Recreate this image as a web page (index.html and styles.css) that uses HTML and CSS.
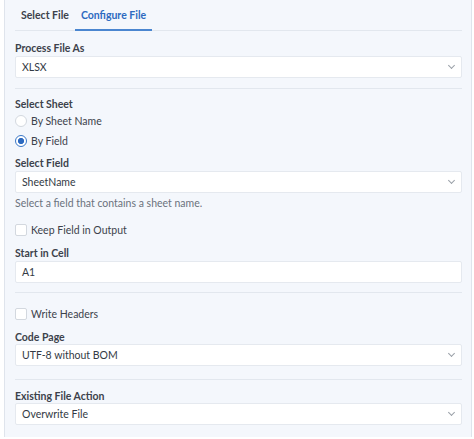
FILE: index.html
```html
<!DOCTYPE html>
<html>
<head>
  <meta charset="utf-8">
  <meta name="viewport" content="width=device-width">
  <title>Configure File</title>
  <link rel="stylesheet" href="styles.css">
</head>
<body>
  <section class="panel">
    <div class="tabs">
      <div class="tab">Select File</div>
      <div class="tab tab_active">Configure File</div>
    </div>

    <div class="label label_first">Process File As</div>
    <div class="select">XLSX<span class="chevron"></span></div>
    <div class="divider"></div>

    <div class="label label_group">Select Sheet</div>
    <div class="option"><span class="radio"></span>By Sheet Name</div>
    <div class="option"><span class="radio radio_on"></span>By Field</div>
    <div class="label label_field">Select Field</div>
    <div class="select">SheetName<span class="chevron"></span></div>
    <div class="help">Select a field that contains a sheet name.</div>
    <div class="option option_check"><span class="check"></span>Keep Field in Output</div>
    <div class="label label_cell">Start in Cell</div>
    <div class="select">A1</div>
    <div class="divider divider_cell"></div>

    <div class="option option_block"><span class="check"></span>Write Headers</div>
    <div class="label label_code">Code Page</div>
    <div class="select">UTF-8 without BOM<span class="chevron"></span></div>
    <div class="divider divider_code"></div>

    <div class="label label_action">Existing File Action</div>
    <div class="select">Overwrite File<span class="chevron"></span></div>
  </section>
</body>
</html>
```

FILE: styles.css
```css
body {
  margin: 0;
  background-color: #ffffff;
  font-family: Lato, "Noto Sans", sans-serif;
  font-size: 10.5px;
  color: #333a44;
}

.panel {
  box-sizing: border-box;
  margin-left: 4px;
  width: 468px;
  height: 437px;
  padding: 0 9px 0 10px;
  background-color: #f4f7fc;
  border-left: 1px solid #dfe4ec;
  border-right: 1px solid #dfe4ec;
}

.tabs {
  display: flex;
  height: 31px;
  border-bottom: 1px solid #e2e7ee;
  box-sizing: border-box;
}
.tab {
  display: flex;
  align-items: center;
  padding: 0 6px;
  font-weight: 700;
  color: #3c424b;
  border-bottom: 2px solid transparent;
  margin-bottom: -1px;
}
.tab_active {
  color: #2d6ac0;
  border-bottom-color: #4a86d0;
}

.label {
  font-weight: 700;
  color: #3c424b;
  line-height: 16px;
}
.label_first {
  margin-top: 9px;
}
.label_group {
  margin-top: 7px;
  margin-bottom: -1px;
}
.label_field {
  margin-top: 4px;
}
.label_cell {
  margin-top: 5px;
}
.label_code {
  margin-top: 5px;
  margin-bottom: -1px;
}
.label_action {
  margin-top: 8px;
  margin-bottom: -1px;
}

.select {
  position: relative;
  box-sizing: border-box;
  height: 22px;
  line-height: 20px;
  padding-left: 6px;
  background-color: #ffffff;
  border: 1px solid #e5e9ef;
  border-radius: 2px;
}
.chevron {
  position: absolute;
  right: 7px;
  top: 6px;
  width: 4px;
  height: 4px;
  border-right: 1px solid #9aa0a8;
  border-bottom: 1px solid #9aa0a8;
  transform: rotate(45deg);
}

.divider {
  height: 1px;
  background-color: #e2e7ee;
  margin-top: 10px;
}
.divider_cell {
  margin-top: 9px;
}
.divider_code {
  margin-top: 13px;
}

.option {
  display: flex;
  align-items: center;
  height: 20px;
  color: #3c424b;
}
.option_check {
  margin-top: 9px;
}
.option_block {
  margin-top: 11px;
}

.radio {
  box-sizing: border-box;
  width: 12px;
  height: 12px;
  margin-right: 4px;
  border: 1px solid #d3d8df;
  border-radius: 50%;
  background-color: #ffffff;
}
.radio_on {
  border-color: #3b78c8;
  background: radial-gradient(circle, #2d6ac0 0 2.8px, #ffffff 3.3px);
}

.check {
  box-sizing: border-box;
  width: 12px;
  height: 12px;
  margin-right: 4px;
  border: 1px solid #d3d8df;
  border-radius: 2px;
  background-color: #ffffff;
}

.help {
  line-height: 16px;
  margin-top: 2px;
  color: #6b727c;
}
```
